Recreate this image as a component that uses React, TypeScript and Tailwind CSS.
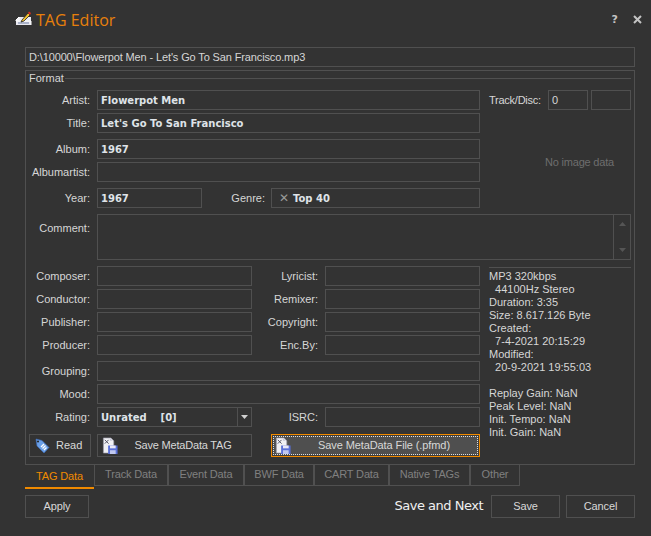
const labelFont = "font-['Liberation_Sans',sans-serif] text-[11px] leading-[13px]";
const valueFont = "font-['DejaVu_Sans',sans-serif] font-bold text-[10px] text-[#dfe3e8]";

function Box({ className = "", children }: { className?: string; children?: React.ReactNode }) {
  return (
    <div className={`h-5 border border-[#505050] flex items-center px-[3px] ${className}`}>{children}</div>
  );
}

function Label({ text, className = "w-[64px]" }: { text: string; className?: string }) {
  return <span className={`shrink-0 text-right text-[#d6d6d6] ${labelFont} ${className}`}>{text}</span>;
}

function Row({ label, value, className = "" }: { label: string; value?: string; className?: string }) {
  return (
    <div className={`flex items-center gap-[7px] ${className}`}>
      <Label text={label} />
      <Box className="flex-1">{value && <span className={valueFont}>{value}</span>}</Box>
    </div>
  );
}

function TitleIcon() {
  return (
    <svg width="17" height="15" viewBox="0 0 17 15" className="shrink-0">
      <path d="M4 6h12v8H1V9z" fill="#e8e8f0" />
      <path d="M1 9l3-3v3zM1 9v1h15v4" fill="none" stroke="#ffffff" strokeWidth="1" />
      <path d="M3 11h11v2H3z" fill="#aab2c8" />
      <path d="M7 9l6-7 2 2-6 6-3 1z" fill="#f2c230" stroke="#202020" strokeWidth="0.8" />
      <path d="M13 2l1-1.500 2 1.500-1 2z" fill="#d83020" />
    </svg>
  );
}

function TagIcon() {
  return (
    <svg width="16" height="16" viewBox="0 0 16 16" className="shrink-0">
      <path d="M2 1l6 1.500 7 7-5 5.500-7-7z" fill="#6aa0e8" stroke="#3a6ab8" strokeWidth="0.6" />
      <circle cx="4" cy="3.500" r="1" fill="#202020" />
      <path d="M7 9l3-3M8.500 10.500l3-3M10 12l2.500-2.500" stroke="#ffffff" strokeWidth="1.300" />
    </svg>
  );
}

function SaveFileIcon() {
  return (
    <svg width="16" height="17" viewBox="0 0 16 18" className="shrink-0">
      <path d="M1 1h8l3 3v13H1z" fill="#f0f0f4" stroke="#9a9aa8" strokeWidth="0.7" />
      <path d="M2.500 3l4 4M6.500 3l-4 4" stroke="#505060" strokeWidth="1" />
      <path d="M8 1v3h3" fill="#c8c8d8" />
      <path d="M6 9h10v9H6z" fill="#5a70d8" />
      <path d="M8 9h6v3H8z" fill="#e8e8f8" />
      <path d="M8 14h6v4H8z" fill="#c0c8f0" />
    </svg>
  );
}

const TABS: [string, string][] = [
  ["Track Data", "w-[74px]"],
  ["Event Data", "w-[76px]"],
  ["BWF Data", "w-[70px]"],
  ["CART Data", "w-[75px]"],
  ["Native TAGs", "w-[81px]"],
  ["Other", "w-[50px]"],
];

const INFO = [
  "MP3 320kbps",
  "\u00a0\u00a044100Hz Stereo",
  "Duration: 3:35",
  "Size: 8.617.126 Byte",
  "Created:",
  "\u00a0\u00a07-4-2021 20:15:29",
  "Modified:",
  "\u00a0\u00a020-9-2021 19:55:03",
  "\u00a0",
  "Replay Gain: NaN",
  "Peak Level: NaN",
  "Init. Tempo: NaN",
  "Init. Gain: NaN",
];

export default function App() {
  return (
    <div className="w-[651px] h-[536px] bg-[#333333] overflow-hidden flex flex-col">
      {/* title bar */}
      <div className="h-[47px] shrink-0 flex items-start pl-[15px] pr-[9px] pt-[11px]">
        <TitleIcon />
        <span className="ml-[4px] -mt-[2px] text-[#e8800c] text-[16px] leading-[22px] font-['Open_Sans',sans-serif]">
          TAG Editor
        </span>
        <span className="ml-auto mt-[1px] text-[#c4c4c4] text-[11px] font-bold leading-[16px] font-['DejaVu_Sans',sans-serif]">
          ?
        </span>
        <svg width="9" height="9" viewBox="0 0 9 9" className="ml-[15px] mt-[4px]">
          <path d="M1 1l7 7M8 1l-7 7" stroke="#c4c4c4" strokeWidth="2" />
        </svg>
      </div>

      <div className="ml-[25px] w-[610px] flex flex-col">
        <Box className={`w-full ${labelFont} text-[#d6d6d6] tracking-[-0.13px]`}>
          D:\10000\Flowerpot Men - Let's Go To San Francisco.mp3
        </Box>

        {/* Format group */}
        <div className="mt-[3px] h-[395px] border border-[#505050] pr-[3px]">
          <div className="h-[19px] flex items-start pl-[3px]">
            <span className={`text-[#d6d6d6] ${labelFont} mt-[1px]`}>Format</span>
            <div className="flex-1 h-px bg-[#505050] mt-[7px] ml-[1px]" />
          </div>

          <div className="flex">
            <div className="w-[454px] shrink-0 flex flex-col">
              <Row label="Artist:" value="Flowerpot Men" />
              <Row label="Title:" value="Let's Go To San Francisco" className="mt-[3px]" />
              <Row label="Album:" value="1967" className="mt-[6px]" />
              <Row label="Albumartist:" className="mt-[3px]" />
              <div className="mt-[6px] flex items-center">
                <Label text="Year:" />
                <Box className="w-[105px] ml-[7px]">
                  <span className={valueFont}>1967</span>
                </Box>
                <Label text="Genre:" className="w-[63px]" />
                <Box className="flex-1 ml-[6px] pl-[7px]">
                  <span className="text-[#9a9a9a] text-[12px] leading-none mr-[4px]">✕</span>
                  <span className={valueFont}>Top 40</span>
                </Box>
              </div>
            </div>
            <div className="flex-1 pl-[9px] flex flex-col">
              <div className="flex items-center justify-between">
                <Label text="Track/Disc:" className="w-auto tracking-[-0.25px]" />
                <div className="flex">
                  <Box className={`w-10 ${labelFont} text-[#d6d6d6]`}>0</Box>
                  <Box className="w-10 ml-[3px]" />
                </div>
              </div>
              <div className={`mt-[46px] pl-[56px] text-[#6e6e6e] tracking-[-0.2px] ${labelFont}`}>No image data</div>
            </div>
          </div>

          {/* comment */}
          <div className="mt-[6px] flex items-start gap-[7px]">
            <Label text="Comment:" className="w-[64px] mt-[8px]" />
            <div className="flex-1 h-[46px] border border-[#505050] flex justify-end">
              <div className="w-[17px] border-l border-[#505050] flex flex-col items-center justify-between py-[7px]">
                <svg width="7" height="4" viewBox="0 0 7 4"><path d="M0 4l3.500-4 3.500 4z" fill="#555555" /></svg>
                <svg width="7" height="4" viewBox="0 0 7 4"><path d="M0 0l3.500 4 3.500-4z" fill="#555555" /></svg>
              </div>
            </div>
          </div>

          <div className="mt-[6px] flex">
            <div className="w-[454px] shrink-0 flex flex-col">
              {[
                ["Composer:", "Lyricist:"],
                ["Conductor:", "Remixer:"],
                ["Publisher:", "Copyright:"],
                ["Producer:", "Enc.By:"],
              ].map(([a, b], i) => (
                <div key={a} className={`flex items-center ${i ? "mt-[3px]" : ""}`}>
                  <Label text={a} />
                  <Box className="w-[155px] ml-[7px]" />
                  <Label text={b} className="w-[66px]" />
                  <Box className="flex-1 ml-[7px]" />
                </div>
              ))}
              <Row label="Grouping:" className="mt-[6px]" />
              <Row label="Mood:" className="mt-[3px]" />
              <div className="mt-[3px] flex items-center">
                <Label text="Rating:" />
                <Box className="w-[155px] ml-[7px] !pr-0">
                  <span className={`${valueFont} flex-1 whitespace-pre`}>Unrated    [0]</span>
                  <div className="w-[14px] h-full border-l border-[#505050] flex items-center justify-center">
                    <svg width="7" height="4" viewBox="0 0 7 4"><path d="M0 0h7l-3.500 4z" fill="#d0d0d0" /></svg>
                  </div>
                </Box>
                <Label text="ISRC:" className="w-[66px]" />
                <Box className="flex-1 ml-[7px]" />
              </div>
              <div className={`mt-[7px] flex items-center text-[#d8d8d8] ${labelFont}`}>
                <button className="ml-[3px] w-[62px] h-[23px] border border-[#505050] flex items-center pl-[4px]">
                  <TagIcon />
                  <span className="ml-[6px]">Read</span>
                </button>
                <button className="ml-[6px] w-[155px] h-[23px] border border-[#505050] flex items-center pl-[4px]">
                  <SaveFileIcon />
                  <span className="flex-1 text-center pr-[3px] tracking-[-0.2px]">Save MetaData TAG</span>
                </button>
                <button className="ml-[19px] w-[209px] h-[23px] border border-[#f08a00] bg-[#3c3c3c] p-px">
                  <span className="h-full flex items-center bg-[#4f4f4f] border border-dotted border-[#e0e0e0] pl-[1px]">
                    <SaveFileIcon />
                    <span className="flex-1 text-center tracking-[-0.1px]">Save MetaData File (.pfmd)</span>
                  </span>
                </button>
              </div>
            </div>
            <div className="flex-1 pl-[9px]">
              <div className="h-px bg-[#505050] mt-px" />
              <div className={`mt-[2px] text-[#d6d6d6] ${labelFont}`}>
                {INFO.map((line, i) => (
                  <div key={i}>{line}</div>
                ))}
              </div>
            </div>
          </div>
        </div>

        {/* tabs */}
        <div className={`flex h-[24px] tracking-[-0.15px] ${labelFont}`}>
          <div className="w-[69px] h-[24px] border-b-[2px] border-[#f08a00] text-[#f08a00] flex items-center justify-center pt-[1px]">
            TAG Data
          </div>
          {TABS.map(([name, w]) => (
            <div
              key={name}
              className={`${w} h-[22px] -mt-px border-x border-b border-[#505050] text-[#808080] flex items-center justify-center`}
            >
              {name}
            </div>
          ))}
        </div>

        {/* bottom buttons */}
        <div className={`mt-[6px] flex items-center text-[#d8d8d8] tracking-[-0.15px] ${labelFont}`}>
          <button className="w-[64px] h-[23px] border border-[#505050]">Apply</button>
          <span className="ml-auto mr-[8px] -mt-[3px] text-[13px] text-[#f0f0f0] font-['DejaVu_Sans',sans-serif] tracking-[-0.5px]">
            Save and Next
          </span>
          <button className="w-[69px] h-[23px] border border-[#505050]">Save</button>
          <button className="ml-[6px] w-[69px] h-[23px] border border-[#505050]">Cancel</button>
        </div>
      </div>
    </div>
  );
}
